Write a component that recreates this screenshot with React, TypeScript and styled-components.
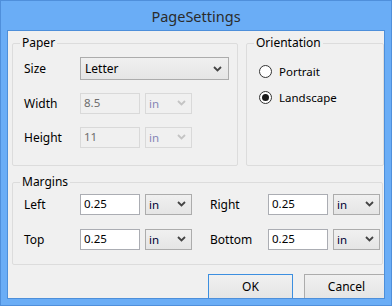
import React from "react";
import styled, { createGlobalStyle } from "styled-components";

const GlobalStyle = createGlobalStyle`
  html, body {
    margin: 0;
    padding: 0;
    background: #ffffff;
  }
  body {
    font-family: "Noto Sans", "Open Sans", sans-serif;
    font-size: 11.5px;
  }
`;

const Window = styled.div`
  width: 392px;
  height: 306px;
  box-sizing: border-box;
  background: #6aadf6;
  border: 1px solid #4f8fdb;
  padding: 0 6px 6px 6px;
  display: flex;
  flex-direction: column;
`;

const TitleBar = styled.div`
  height: 28px;
  display: flex;
  align-items: center;
  justify-content: center;
  font-size: 14.5px;
  color: #2b2b2b;
  padding-top: 1px;
`;

const Client = styled.div`
  flex: 1;
  background: #f0f0f0;
  border: 1px solid #4d8fda;
  overflow: hidden;
  padding: 4px 0 0 4px;
  display: flex;
  flex-direction: column;
`;

const TopRow = styled.div`
  display: flex;
  gap: 8px;
`;

const Group = styled.fieldset<{ $w: number }>`
  margin: 0;
  width: ${(p) => p.$w}px;
  box-sizing: border-box;
  border: 1px solid #dcdcdc;
  border-radius: 2px;
  padding: 0 0 0 11px;
  min-width: 0;
`;

const Legend = styled.legend`
  padding: 0 2px 0 2px;
  margin-left: -4px;
  line-height: 16px;
  font-size: 12px;
  color: #000;
`;

const PaperBody = styled.div`
  padding-bottom: 11px;
`;

const Row = styled.div<{ $h: number }>`
  height: ${(p) => p.$h}px;
  display: flex;
  align-items: center;
`;

const Label = styled.span<{ $w: number }>`
  width: ${(p) => p.$w}px;
  flex-shrink: 0;
  color: #000;
  font-size: 12px;
`;

const SizeSelect = styled.div`
  width: 149px;
  height: 23px;
  box-sizing: border-box;
  border: 1px solid #acacac;
  background: linear-gradient(#f0f0f0, #e5e5e5);
  display: flex;
  align-items: center;
  justify-content: space-between;
  padding: 0 6px 0 4px;
  color: #000;
  font-size: 12px;
`;

const TextBox = styled.div<{ $disabled?: boolean }>`
  width: 60px;
  height: 21px;
  box-sizing: border-box;
  border: 1px solid ${(p) => (p.$disabled ? "#d9d9d9" : "#abadb3")};
  background: ${(p) => (p.$disabled ? "#f0f0f0" : "#ffffff")};
  color: ${(p) => (p.$disabled ? "#6d6d6d" : "#000")};
  padding: 1px 0 0 3px;
  line-height: 16px;
  flex-shrink: 0;
`;

const UnitSelect = styled.div<{ $disabled?: boolean }>`
  width: 47px;
  height: 21px;
  margin-left: 5px;
  box-sizing: border-box;
  border: 1px solid ${(p) => (p.$disabled ? "#d9d9d9" : "#acacac")};
  background: ${(p) => (p.$disabled ? "#f0f0f0" : "linear-gradient(#f0f0f0, #e5e5e5)")};
  color: ${(p) => (p.$disabled ? "#8585b5" : "#000033")};
  display: flex;
  align-items: center;
  justify-content: space-between;
  padding: 0 5px 0 3px;
  flex-shrink: 0;
`;

const RadioList = styled.div`
  padding-top: 7px;
  display: flex;
  flex-direction: column;
`;

const RadioRow = styled.div`
  height: 26px;
  display: flex;
  align-items: center;
  gap: 7px;
  padding-left: 1px;
`;

const RadioCircle = styled.span<{ $checked?: boolean }>`
  width: 13px;
  height: 13px;
  box-sizing: border-box;
  border-radius: 50%;
  border: 1px solid #333333;
  background: #ffffff;
  display: flex;
  align-items: center;
  justify-content: center;
  &::after {
    content: "";
    width: 7px;
    height: 7px;
    border-radius: 50%;
    background: ${(p) => (p.$checked ? "#1a1a1a" : "transparent")};
  }
`;

const MarginsWrap = styled.div`
  margin-top: 8px;
`;

const MarginsBody = styled.div`
  display: flex;
  flex-direction: column;
  gap: 7px;
  padding-bottom: 11px;
`;

const MarginRow = styled.div`
  height: 28px;
  display: flex;
  align-items: center;
  gap: 18px;
`;

const Field = styled.div`
  display: flex;
  align-items: center;
`;

const Footer = styled.div`
  margin-top: 9px;
  padding-left: 196px;
  display: flex;
  gap: 11px;
`;

const Button = styled.div<{ $default?: boolean }>`
  width: 85px;
  height: 25px;
  flex-shrink: 0;
  box-sizing: border-box;
  border: 1px solid ${(p) => (p.$default ? "#3c8fe0" : "#acacac")};
  background: linear-gradient(#f0f0f0, #e5e5e5);
  display: flex;
  align-items: center;
  justify-content: center;
  color: #000;
  font-size: 12px;
`;

const Chevron = ({ disabled }: { disabled?: boolean }) => (
  <svg width="9" height="6" viewBox="0 0 9 6">
    <path
      d="M1 1 L4.5 4.5 L8 1"
      fill="none"
      stroke={disabled ? "#c4c4c4" : "#444444"}
      strokeWidth="1.8"
    />
  </svg>
);

const Unit = ({ disabled }: { disabled?: boolean }) => (
  <UnitSelect $disabled={disabled}>
    <span>in</span>
    <Chevron disabled={disabled} />
  </UnitSelect>
);

const MarginField = ({ label, labelWidth }: { label: string; labelWidth: number }) => (
  <Field>
    <Label $w={labelWidth}>{label}</Label>
    <TextBox>0.25</TextBox>
    <Unit />
  </Field>
);

const App = () => {
  return (
    <>
      <GlobalStyle />
      <Window>
        <TitleBar>PageSettings</TitleBar>
        <Client>
          <TopRow>
            <Group $w={226}>
              <Legend>Paper</Legend>
              <PaperBody>
                <Row $h={35}>
                  <Label $w={56}>Size</Label>
                  <SizeSelect>
                    <span>Letter</span>
                    <Chevron />
                  </SizeSelect>
                </Row>
                <Row $h={34}>
                  <Label $w={56}>Width</Label>
                  <TextBox $disabled>8.5</TextBox>
                  <Unit disabled />
                </Row>
                <Row $h={34}>
                  <Label $w={56}>Height</Label>
                  <TextBox $disabled>11</TextBox>
                  <Unit disabled />
                </Row>
              </PaperBody>
            </Group>
            <Group $w={138}>
              <Legend>Orientation</Legend>
              <RadioList>
                <RadioRow>
                  <RadioCircle />
                  <span>Portrait</span>
                </RadioRow>
                <RadioRow>
                  <RadioCircle $checked />
                  <span>Landscape</span>
                </RadioRow>
              </RadioList>
            </Group>
          </TopRow>
          <MarginsWrap>
            <Group $w={371}>
              <Legend>Margins</Legend>
              <MarginsBody>
                <MarginRow>
                  <MarginField label="Left" labelWidth={56} />
                  <MarginField label="Right" labelWidth={58} />
                </MarginRow>
                <MarginRow>
                  <MarginField label="Top" labelWidth={56} />
                  <MarginField label="Bottom" labelWidth={58} />
                </MarginRow>
              </MarginsBody>
            </Group>
          </MarginsWrap>
          <Footer>
            <Button $default>OK</Button>
            <Button>Cancel</Button>
          </Footer>
        </Client>
      </Window>
    </>
  );
};

export default App;
